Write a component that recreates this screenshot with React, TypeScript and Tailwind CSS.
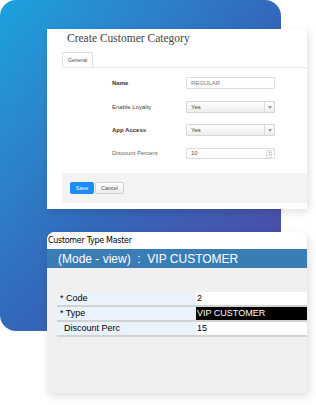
import React from "react";

const formFont = { fontFamily: '"Liberation Sans", Arial, sans-serif' };

function Arrow() {
  return (
    <div className="ml-auto flex h-full w-[10px] items-center justify-center border-l border-[#dcdcdc]">
      <svg width="4" height="3" viewBox="0 0 4 3">
        <path d="M0 0 L4 0 L2 3 Z" fill="#999" />
      </svg>
    </div>
  );
}

function Spinner() {
  return (
    <div className="ml-auto mr-[2px] flex h-[8px] w-[6px] flex-col items-center justify-center gap-[1px] rounded-[1px] border border-[#ddd]">
      <svg width="3" height="2" viewBox="0 0 4 2">
        <path d="M0 2 L4 2 L2 0 Z" fill="#aaa" />
      </svg>
      <svg width="3" height="2" viewBox="0 0 4 2">
        <path d="M0 0 L4 0 L2 2 Z" fill="#aaa" />
      </svg>
    </div>
  );
}

export default function App() {
  return (
    <div className="relative h-[405px] w-[316px] overflow-hidden bg-white">
      {/* gradient backdrop */}
      <div className="absolute left-0 top-0 h-[331px] w-[281px] rounded-[16px] bg-linear-to-br from-[#1aa2de] via-[#3269bb] to-[#4e43a0]" />

      <div className="relative flex flex-col">
        {/* Create Customer Category card */}
        <div className="ml-[47px] mt-[29px] flex h-[180px] w-[260px] flex-col bg-white shadow-[2px_3px_8px_rgba(0,0,0,0.12)]">
          <div
            className="h-[23px] pl-[20px] pt-[2px] text-[11.5px] leading-[14px] text-[#444]"
            style={{ fontFamily: '"Liberation Serif", "Times New Roman", serif' }}
          >
            Create Customer Category
          </div>
          <div className="ml-[15px] flex flex-1 flex-col" style={formFont}>
            <div className="flex h-[16px] border-b border-[#e6e6e6]">
              <div className="flex w-[31px] items-center justify-center border border-b-0 border-[#e0e0e0] bg-white text-[5.5px] text-[#555]">
                General
              </div>
            </div>

            <div className="mt-[9px] flex h-[12px] items-center">
              <div className="w-[124px] pl-[50px] text-[6px] font-bold text-[#333]">Name</div>
              <div className="flex h-full w-[89px] items-center rounded-[1px] border border-[#ddd] bg-white pl-[4px] text-[6px] text-[#777]">
                REGULAR
              </div>
            </div>

            <div className="mt-[12px] flex h-[12px] items-center">
              <div className="w-[124px] pl-[50px] text-[6px] text-[#444]">Enable Loyalty</div>
              <div className="flex h-full w-[89px] items-center rounded-[1px] border border-[#d6d6d6] bg-linear-to-b from-white to-[#eeeeee] pl-[4px] text-[6px] text-[#444]">
                Yes
                <Arrow />
              </div>
            </div>

            <div className="mt-[11px] flex h-[12px] items-center">
              <div className="w-[124px] pl-[50px] text-[6px] font-bold text-[#333]">App Access</div>
              <div className="flex h-full w-[89px] items-center rounded-[1px] border border-[#d6d6d6] bg-linear-to-b from-white to-[#eeeeee] pl-[4px] text-[6px] text-[#444]">
                Yes
                <Arrow />
              </div>
            </div>

            <div className="mt-[12px] flex h-[11px] items-center">
              <div className="w-[124px] pl-[50px] text-[6px] text-[#666]">Discount Percent</div>
              <div className="flex h-full w-[89px] items-center rounded-[1px] border border-[#ddd] bg-white pl-[4px] text-[6px] text-[#555]">
                10
                <Spinner />
              </div>
            </div>

            <div className="mt-[14px] flex h-[30px] items-center gap-[1px] bg-[#f3f3f3] pl-[8px]">
              <div className="flex h-[12px] w-[24px] items-center justify-center rounded-[2px] bg-[#1a8cf5] text-[5.5px] text-white">
                Save
              </div>
              <div className="flex h-[12px] w-[29px] items-center justify-center rounded-[2px] border border-[#cfcfcf] bg-linear-to-b from-white to-[#ececec] text-[5.5px] text-[#555]">
                Cancel
              </div>
            </div>
          </div>
        </div>

        {/* Customer Type Master card */}
        <div
          className="ml-[47px] mt-[23px] flex h-[161px] w-[260px] flex-col overflow-hidden rounded-t-[8px] bg-[#f0f0f0] shadow-[2px_3px_8px_rgba(0,0,0,0.14)]"
          style={formFont}
        >
          <div
            className="flex h-[17px] items-center bg-white pl-[1px] text-[8px] text-black"
            style={{ fontFamily: 'Tahoma, "DejaVu Sans", sans-serif', letterSpacing: "-0.3px" }}
          >
            Customer Type Master
          </div>
          <div className="flex h-[19px] items-center whitespace-pre bg-[#3a7db5] pl-[11px] text-[12px] text-white">
            {"(Mode - view)  :  VIP CUSTOMER"}
          </div>
          <div className="ml-[10px] mt-[24px] flex flex-col text-[9px] text-black">
            <div className="flex h-[15px] border-b-2 border-[#d2d2d2]">
              <div className="flex w-[138px] items-center bg-[#eaf3fc] pl-[3px]">* Code</div>
              <div className="ml-[1px] flex flex-1 items-center bg-white pl-[1px]">2</div>
            </div>
            <div className="flex h-[15px] border-b-2 border-[#d2d2d2]">
              <div className="flex w-[138px] items-center bg-[#eaf3fc] pl-[3px]">* Type</div>
              <div className="ml-[1px] flex flex-1 items-center bg-black pl-[1px] text-white">VIP CUSTOMER</div>
            </div>
            <div className="flex h-[15px] border-b-2 border-[#d2d2d2]">
              <div className="flex w-[138px] items-center bg-[#eaf3fc] pl-[7px]">Discount Perc</div>
              <div className="ml-[1px] flex flex-1 items-center bg-white pl-[1px]">15</div>
            </div>
          </div>
        </div>
      </div>
    </div>
  );
}
